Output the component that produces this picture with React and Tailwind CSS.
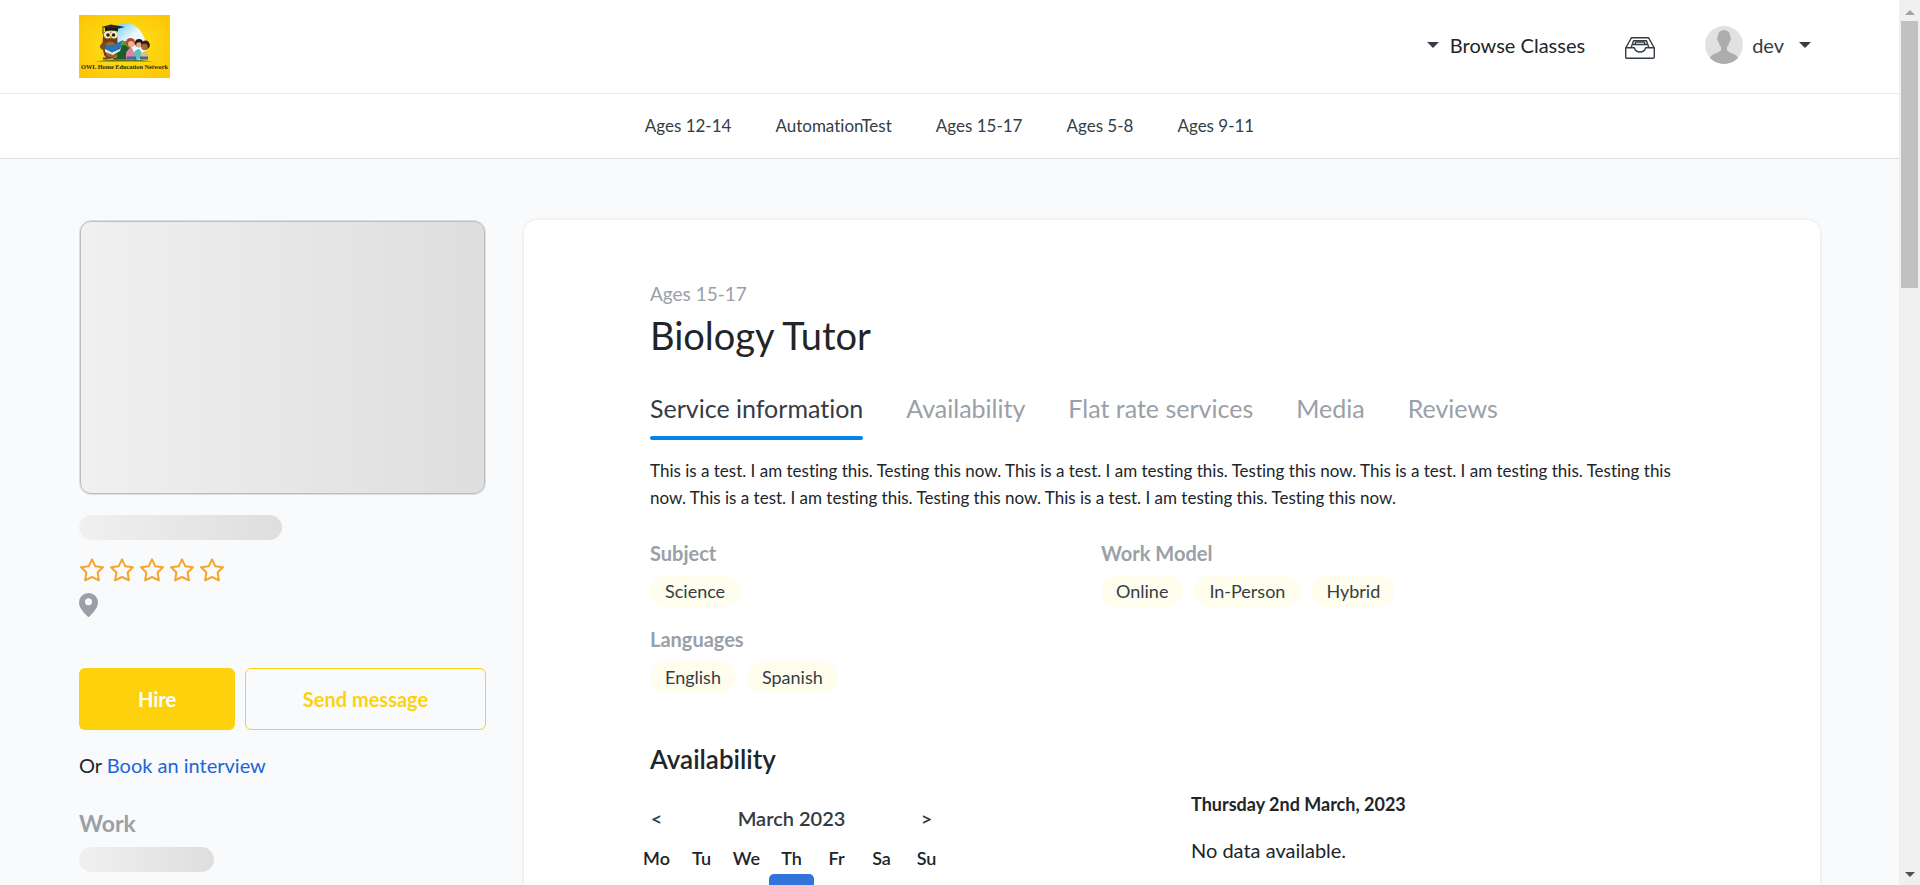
const ages = ["Ages 12-14", "AutomationTest", "Ages 15-17", "Ages 5-8", "Ages 9-11"];
const tabs = ["Availability", "Flat rate services", "Media", "Reviews"];
const days = ["Mo", "Tu", "We", "Th", "Fr", "Sa", "Su"];

function Logo() {
  return (
    <svg viewBox="0 0 91 63" className="block h-[63px] w-[91px]" role="img" aria-label="OWL Home Education Network">
      <defs>
        <radialGradient id="gold" cx="50%" cy="50%" r="70%">
          <stop offset="0" stopColor="#ffe21a" />
          <stop offset="1" stopColor="#fcc404" />
        </radialGradient>
        <linearGradient id="sky" x1="0" y1="0" x2="0.8" y2="1">
          <stop offset="0" stopColor="#4fc3f0" />
          <stop offset="0.5" stopColor="#eaf8fd" />
          <stop offset="1" stopColor="#ffffff" />
        </linearGradient>
      </defs>
      <rect width="91" height="63" fill="url(#gold)" />
      <path d="M34 44 C30 18 36 8 46 8 C58 8 66 18 67 32 L66 45 Z" fill="url(#sky)" />
      <path d="M37 29 Q44 23 50 28 L58 45 L36 45 Z" fill="#5c9a30" />
      <path d="M38 32 Q44 27 50 33 L50 44 L38 44 Z" fill="#1f5c2a" />
      <path d="M16 46.500 Q44 42 74 46.500 Z" fill="#5a7a1c" />
      <path d="M25 17 Q23 25 24 30 Q23 42 30 44 Q38 43 38 36 Q39 26 38 17 Z" fill="#6b3d1e" />
      <path d="M25 26 Q19 31 22 34 L29 37 L28 30 Z" fill="#7d4a24" />
      <path d="M27 28 Q32 25 36 28 L36 41 Q31 44 27 40 Z" fill="#9a6434" />
      <circle cx="28.500" cy="19.800" r="3.6" fill="#f4ecc4" />
      <circle cx="35" cy="19.800" r="3.6" fill="#f4ecc4" />
      <circle cx="29" cy="20" r="1.8" fill="#2b2118" />
      <circle cx="34.500" cy="20" r="1.8" fill="#2b2118" />
      <path d="M30.500 21 L33 21 L31.700 24.500 Z" fill="#f0a020" />
      <path d="M22.500 12 L32 9.500 L46 12 L34 15 Z" fill="#23282a" />
      <path d="M26 13 L26 16.500 Q32 14.500 39 16.500 L39 13 Z" fill="#15191b" />
      <path d="M24 12.500 L24 19" stroke="#4a4420" strokeWidth="1" />
      <path d="M27 30 L35 30 L44 25 L40 35 L34 38 L27 35 Z" fill="#2478b8" />
      <path d="M26 34 L33 37.500 L41 34 L44 26 L41 36 L34 40 L26 37 Z" fill="#dfe9ec" />
      <path d="M24 43.500 L29 43.500 M34 43.500 L38 43.500" stroke="#7c3d12" strokeWidth="2" />
      <circle cx="51.500" cy="27.500" r="4.500" fill="#b5482e" />
      <circle cx="52" cy="29" r="3" fill="#f1b48c" />
      <path d="M47 45 Q46 34 52 33 Q56 35 55 45 Z" fill="#e882a0" />
      <circle cx="60" cy="28" r="4" fill="#1d1a1c" />
      <circle cx="60" cy="30" r="2.800" fill="#e9ab80" />
      <path d="M54 44 Q54 34 60 34 Q64 36 62 44 Z" fill="#5cc0c4" />
      <circle cx="66.500" cy="30" r="4.400" fill="#33201a" />
      <circle cx="65.500" cy="32" r="3.200" fill="#a8683c" />
      <path d="M61 45 Q61 37 66 36 Q71 38 69 45 Z" fill="#e0c46c" />
      <path d="M48 41.500 L57 41.500 L57 44.500 L47 44.500 Z M61 41.500 L69 41.500 L69 44.500 L61 44.500 Z" fill="#4b64a8" />
      <text x="45.500" y="54" textAnchor="middle" fontFamily="Liberation Serif, serif" fontWeight="700" fontSize="6.300" fill="#2b2a08">
        OWL Home Education Network
      </text>
    </svg>
  );
}

function Caret() {
  return (
    <svg viewBox="0 0 12 6" className="h-[6px] w-[12px] shrink-0" aria-hidden="true">
      <path d="M0 0H12L6 6Z" fill="#343d46" />
    </svg>
  );
}

function InboxIcon() {
  return (
    <svg viewBox="0 0 30 22" className="h-[22px] w-[30px]" fill="none" stroke="#343d46" strokeWidth="1.4" strokeLinejoin="round" aria-hidden="true">
      <path d="M0.700 11 L6.500 0.700 H23.500 L29.300 11 V20 Q29.300 21.300 28 21.300 H2 Q0.700 21.300 0.700 20 Z" />
      <path d="M0.700 10.700 H9.300 Q10.500 15 15 15 Q19.500 15 20.700 10.700 H29.300" />
      <path d="M6.200 10.500 L8.500 3.700 H21.500 L23.800 10.500" />
      <path d="M7.800 7.500 H22.200 M10 7.500 L10.700 5 H19.300 L20 7.500" />
    </svg>
  );
}

function Avatar() {
  return (
    <svg viewBox="0 0 38 38" className="size-[38px]" aria-hidden="true">
      <clipPath id="face">
        <circle cx="19" cy="19" r="19" />
      </clipPath>
      <g clipPath="url(#face)">
        <rect width="38" height="38" fill="#e1e1e1" />
        <path d="M19 4.300 C23 4.300 25.300 6.800 25.200 11 C26.500 11.300 26 15 24.600 15.500 C24.200 18 23 19.800 22 20.800 V24 C23 26.500 31 27.500 33 31.500 V38 H5 V31.500 C7 27.500 15 26.500 16 24 V20.800 C15 19.800 13.800 18 13.400 15.500 C12 15 11.500 11.300 12.800 11 C12.700 6.800 15 4.300 19 4.300Z" fill="#adadad" />
      </g>
    </svg>
  );
}

function Star() {
  return (
    <svg viewBox="0 0 24 24" className="size-[24px]" fill="none" stroke="#f6a52b" strokeWidth="2" strokeLinejoin="round" aria-hidden="true">
      <path d="M12 1.300 L15.200 8.200 L22.900 9.200 L17.600 14.500 L18.900 22.300 L12 19 L5.100 22.300 L6.400 14.500 L1.100 9.200 L8.800 8.200 Z" />
    </svg>
  );
}

function Pills({ label, items }) {
  return (
    <section>
      <h3 className="text-[20px] leading-[30px] font-bold text-[#9aa0a8]">{label}</h3>
      <ul className="mt-[7px] flex flex-wrap gap-[11px]">
        {items.map((item) => (
          <li key={item} className="rounded-full bg-[#fffdee] px-[15px] text-[18px] leading-[32px] text-[#343d46]">
            {item}
          </li>
        ))}
      </ul>
    </section>
  );
}

function ScrollRail() {
  return (
    <div className="flex w-[21px] shrink-0 flex-col items-center bg-[#f0f0f0]" aria-hidden="true">
      <div className="flex h-[21px] items-center">
        <svg viewBox="0 0 10 5" className="mt-[3px] h-[5px] w-[10px]">
          <path d="M0 5H10L5 0Z" fill="#a3a3a3" />
        </svg>
      </div>
      <div className="h-[267px] w-[17px] bg-[#c1c1c1]" />
      <div className="mt-auto flex h-[21px] items-center">
        <svg viewBox="0 0 10 5" className="h-[5px] w-[10px]">
          <path d="M0 0H10L5 5Z" fill="#505050" />
        </svg>
      </div>
    </div>
  );
}

export default function App() {
  return (
    <div className="flex h-screen overflow-hidden bg-[#f8fafc] font-['Lato','Open_Sans',sans-serif] text-[20px] text-[#212529] [font-variant-ligatures:none]">
      <div className="min-w-0 flex-1 overflow-hidden">
        <header className="flex h-[94px] items-center justify-between border-b border-[#ebebeb] bg-white pr-[88px] pl-[79px]">
          <a href="#home">
            <Logo />
          </a>
          <div className="flex items-center pb-[4px]">
            <button type="button" className="flex items-center gap-[11px]">
              <Caret />
              Browse Classes
            </button>
            <a href="#inbox" aria-label="Inbox" className="ml-[40px] pt-[6px]">
              <InboxIcon />
            </a>
            <button type="button" className="ml-[50px] flex items-center gap-[9px] text-[#343d46]">
              <Avatar />
              <span className="mr-[6px]">dev</span>
              <Caret />
            </button>
          </div>
        </header>
        <nav className="flex h-[65px] items-center justify-center gap-[44px] border-b border-[#dbe1e6] bg-white text-[17px] text-[#343d46]">
          {ages.map((name) => (
            <a key={name} href="#category">
              {name}
            </a>
          ))}
        </nav>

        <div className="flex items-start gap-[38px] px-[79px] pt-[61px]">
          <aside className="w-[407px] shrink-0">
            <div className="rounded-[12px] border border-[#dcdfe2]">
              <div className="h-[273px] rounded-[11px] border border-[#bcbdbf] bg-linear-to-r from-[#f0f0f0] to-[#dedede]" />
            </div>
            <div className="mt-[20px] h-[25px] w-[203px] rounded-full bg-linear-to-r from-[#f0f0f0] to-[#dedede]" />
            <div className="mt-[18px] flex gap-[6px] pl-[1px]" role="img" aria-label="No rating">
              <Star />
              <Star />
              <Star />
              <Star />
              <Star />
            </div>
            <svg viewBox="0 0 19 24" className="mt-[11px] h-[24px] w-[19px]" aria-hidden="true">
              <path fillRule="evenodd" d="M9.500 0A9.500 9.500 0 0 0 0 9.500C0 14.500 4.500 19.500 9.500 24.300C14.500 19.500 19 14.500 19 9.500A9.500 9.500 0 0 0 9.500 0ZM9.500 5.300A3.500 3.500 0 1 1 9.500 12.300A3.500 3.500 0 1 1 9.500 5.300Z" fill="#9aa0a6" />
            </svg>
            <div className="mt-[51px] flex gap-[10px]">
              <button type="button" className="h-[62px] w-[156px] rounded-[6px] bg-[#fdd20c] font-bold text-white">
                Hire
              </button>
              <button type="button" className="h-[62px] flex-1 rounded-[6px] border border-[#fdd20c] font-bold text-[#fdd20c]">
                Send message
              </button>
            </div>
            <p className="mt-[20px] leading-[30px]">
              Or{" "}
              <a href="#interview" className="text-[#1a66d6]">
                Book an interview
              </a>
            </p>
            <h2 className="mt-[28px] text-[23px] leading-[30px] font-bold text-[#9aa0a8]">Work</h2>
            <div className="mt-[9px] h-[25px] w-[135px] rounded-full bg-linear-to-r from-[#f0f0f0] to-[#dedede]" />
          </aside>

          <main className="min-w-0 flex-1 rounded-[13px] bg-white px-[126px] pt-[60px] pb-[80px] shadow-[0_0_3px_rgba(0,0,0,0.12)]">
            <p className="text-[19px] leading-[28px] text-[#9aa0a8]">Ages 15-17</p>
            <h1 className="text-[38px] leading-[54px]">Biology Tutor</h1>
            <div className="mt-[22px] flex items-start gap-[43px] text-[25px] leading-[48px] text-[#9aa0a8]" role="tablist">
              <button type="button" role="tab" aria-selected="true" className="flex flex-col text-[#343d46]">
                Service information
                <span className="mt-[4px] h-[4px] w-full rounded-full bg-[#0683e8]" />
              </button>
              {tabs.map((name) => (
                <button key={name} type="button" role="tab" aria-selected="false">
                  {name}
                </button>
              ))}
            </div>
            <p className="mt-[17px] text-[17px] leading-[27px]">
              This is a test. I am testing this. Testing this now. This is a test. I am testing this. Testing this now. This is a test. I am testing this. Testing this now. This is a test. I am testing this. Testing this now. This is a test. I am testing this. Testing this now.
            </p>
            <div className="mt-[27px] grid max-w-[902px] grid-cols-2 gap-y-[17px]">
              <Pills label="Subject" items={["Science"]} />
              <Pills label="Work Model" items={["Online", "In-Person", "Hybrid"]} />
              <Pills label="Languages" items={["English", "Spanish"]} />
            </div>
            <h2 className="mt-[48px] text-[26px] leading-[36px] font-semibold">Availability</h2>
            <div className="mt-[14px] grid grid-cols-2 gap-[38px]">
              <table className="mt-[3px] -ml-[16px] w-[315px] table-fixed border-collapse text-center">
                <thead>
                  <tr className="h-[48px] text-[#343a40]">
                    <th className="p-0 font-semibold">
                      <button type="button" aria-label="Previous month">&lt;</button>
                    </th>
                    <th colSpan={5} className="p-0 font-semibold">March 2023</th>
                    <th className="p-0 font-semibold">
                      <button type="button" aria-label="Next month">&gt;</button>
                    </th>
                  </tr>
                  <tr className="h-[32px] text-[18px]">
                    {days.map((day) => (
                      <th key={day} className="p-0 font-semibold">{day}</th>
                    ))}
                  </tr>
                </thead>
                <tbody>
                  <tr className="h-[45px]">
                    <td colSpan={3} />
                    <td className="rounded-[5px] bg-[#3273dc]" />
                    <td colSpan={3} />
                  </tr>
                </tbody>
              </table>
              <div>
                <h3 className="text-[18px] leading-[27px] font-bold">Thursday 2nd March, 2023</h3>
                <p className="mt-[17px] leading-[30px]">No data available.</p>
              </div>
            </div>
          </main>
        </div>
      </div>
      <ScrollRail />
    </div>
  );
}
